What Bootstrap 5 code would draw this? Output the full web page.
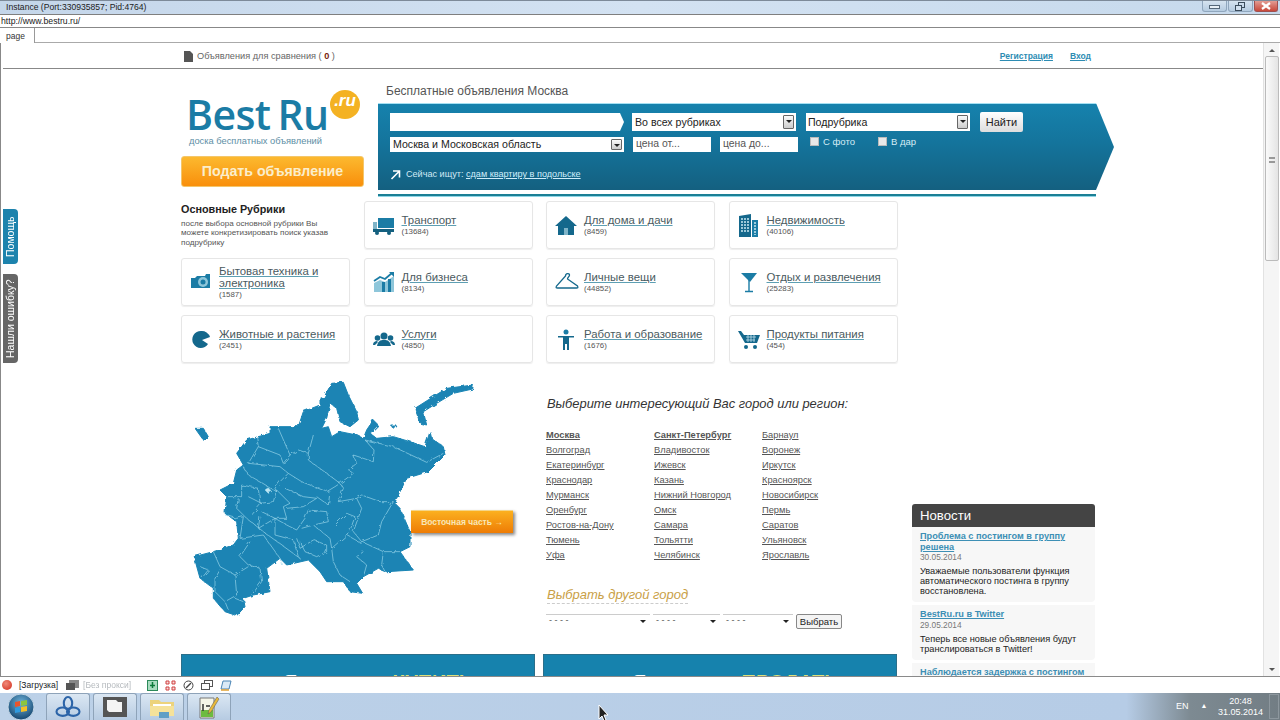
<!DOCTYPE html>
<html lang="ru">
<head>
<meta charset="UTF-8">
<title>Instance</title>
<link href="https://cdn.jsdelivr.net/npm/bootstrap@5.3.0/dist/css/bootstrap.min.css" rel="stylesheet">
<style>
html,body{height:720px;overflow:hidden;background:#fff}
body{font-family:"Liberation Sans",Arial,sans-serif;font-size:10px;color:#333;width:1280px}
a{color:inherit}
/* window chrome */
.w-title{height:14px;background:linear-gradient(90deg,#c4d6ea,#d3e2f2 50%,#c6d9ec);border-top:1px solid #7d8a99;font-size:8.6px;color:#222;padding-left:6px;line-height:12px}
.w-btns{margin-left:auto;margin-right:2px}
.w-btn{height:11px;width:25px;border:1px solid #8fa6bd;border-top:0;border-radius:0 0 3px 3px;background:linear-gradient(#d5e3f0,#b5cbe0);margin-left:1px}
.w-btn.shut{width:24px;background:linear-gradient(#e39c93,#c8483a);border-color:#a05050}
.w-addr{height:14px;border-top:1px solid #7f7f7f;border-bottom:1px solid #888;font-size:8.7px;line-height:12px;color:#222;padding-left:1px}
.w-tabs{height:15px;position:relative;border-bottom:1px solid #aaa}
.w-tab{width:35px;height:15px;border-right:1px solid #999;font-size:8.5px;line-height:16px;padding-left:6px;background:#fff}
.w-body{height:633px;position:relative;overflow:hidden;border-left:1px solid #888}
.w-scroll{position:absolute;top:0;right:1px;width:16px;height:633px;border-left:1px solid #e2e2e2;background:#f5f5f5}
.w-thumb{position:absolute;top:13px;left:1px;width:14px;height:205px;background:linear-gradient(90deg,#fafafa,#e4e4e4);border:1px solid #bbb;border-radius:2px}
.w-thumb i{position:absolute;left:3px;top:100px;width:6px;height:6px;border-top:2px double #999;border-bottom:2px double #999}
.w-arr{position:absolute;left:5px;width:0;height:0;border:3px solid transparent}
.w-arr.up{top:3px;border-bottom-color:#555}
.w-arr.down{bottom:2px;border-top-color:#555}
.w-status{height:17px;border-top:1px solid #8a8a8a;font-size:8.5px;background:#fff}
.rec{width:10px;height:10px;border-radius:50%;background:radial-gradient(circle at 40% 35%,#f08a7a,#d22a18);margin:0 7px 0 2px}
.tool-icons{gap:7px;margin-left:16px}
.task{height:27px;background:linear-gradient(90deg,#bcd1e8 0,#b6cce6 88%,#7d8a92 93%,#727d84);position:relative}
.orb{width:30px;height:27px;margin:0 10px 0 6px}
.task-b{width:44px;height:27px;margin-right:3px;background:linear-gradient(#dbe7f3,#b6cbe2);border:1px solid #8ea3b9;border-bottom:0;border-radius:3px 3px 0 0}
.cursor-ico{left:598px;top:12px}
.tray{margin-left:auto;color:#fff;font-size:9px;width:104px}
.tray-up{font-size:7px;margin-left:12px}
.tray-clock{text-align:center;line-height:11px;width:50px;margin-left:8px}
.tray-show{width:10px;height:25px;border:1px solid #8d979e;margin-left:4px}
/* page */
.side-tab{position:absolute;left:2px;width:15px;border-radius:4px 0 0 4px;color:#fff;font-size:10.5px;writing-mode:vertical-rl;transform:rotate(180deg);text-align:center;line-height:15px}
.side-help{top:166px;height:55px;background:#1d83ad}
.side-err{top:231px;height:89px;background:#666}
.top-strip{height:26px;margin:0 15px 0 2px;border-bottom:1px solid #888;padding:2px 0 0 181px;font-size:9.2px;color:#666}
.top-strip b{color:#7a1f10}
.top-links{margin-left:auto;margin-right:174px;gap:17px;font-size:8.5px;font-weight:700;color:#2d8cb3}
.page-in{margin-left:180px;width:914px}
.logo-col{width:183px;flex:none}
.logo{height:69px;position:relative;margin-top:17px;padding-left:5px}
.logo-txt{font-family:"Open Sans",sans-serif;font-weight:600;font-size:41px;line-height:45px;padding-top:6px;color:#1b7ca5;letter-spacing:-.6px;display:block;height:51px;word-spacing:-3px}
.logo-ru{position:absolute;left:149px;top:4px;width:30px;height:29px;border-radius:50%;background:#f4b223;color:#fff;font-style:italic;font-weight:700;font-size:17px;line-height:22px;text-align:center}
.logo-sub{font-size:9.3px;color:#5d8ea5;display:block;margin:-2px 0 0 3px}
.add-btn{height:31px;margin-top:1px;border-radius:3px;background:linear-gradient(#fcb92f,#f98f0b);color:#fbeecb;font-weight:700;font-size:14.2px;line-height:29px;text-align:center;border:1px solid #f4c66a;width:183px}
.hero{margin-left:14px;width:736px;flex:none}
.hero-h{font-size:12px;color:#555;padding-left:8px;height:13px;line-height:13px;margin-top:16px}
.bar{height:87px;margin-top:5px;background:linear-gradient(#1682ad,#14749c 45%,#146080);border-top:1px solid #a5e0f2;clip-path:polygon(0 0,718px 0,736px 44px,718px 87px,0 87px);padding:9px 0 0 12px;font-size:9.5px;color:#fff}
.bar-line{width:718px;height:3px;background:#1b7f95;border-bottom:1px solid #8fd6e6;margin-top:4px}
.bar-r{gap:8px;height:18px}
.bar-r2{gap:9px;height:15px;margin-top:6px}
.sel{background:#fff;color:#222;font-size:10.6px;height:100%;padding-left:3px;line-height:1;position:relative}
.sel i{position:absolute;right:2px;top:2px;bottom:2px;width:11px;background:linear-gradient(#fafafa,#ccc);border:1px solid #666;border-radius:1px}
.sel i::after{content:"";position:absolute;left:2px;top:4px;border:3px solid transparent;border-top-color:#222}
.q-in{width:234px;height:18px;background:#fff;clip-path:polygon(0 0,230px 0,234px 9px,230px 18px,0 18px)}
.w164{width:164px}
.w234{width:234px}
.sub-sel{margin-left:2px;padding-left:2px}
.price{width:78px;color:#555;font-size:10.4px}
.go{width:43px;height:20px;margin:-1px 0 0 2px;border-radius:2px;background:linear-gradient(#fff,#ddd);color:#222;font-size:11px;text-align:center;line-height:21px}
.chk-box{margin-left:3px}
.chk{width:9px;height:9px;background:#e8e8e8;border:1px solid #bbb;margin-right:4px}
.chk-lbl{color:#d6ecf5;font-size:9.5px;margin-top:-2px}
.chk-lbl.one{margin-right:23px}
.now{margin-top:16px;color:#d2eaf4;font-size:9.1px}
.now svg{margin-right:5px}
.now u{color:#cfeefb}
.rub-grid{display:grid;grid-template-columns:repeat(4,169px);gap:9px 13.5px;margin-top:4px;width:717px}
.rub-intro{height:48px;padding-top:2px}
.rub-intro h6{font-size:10.8px;font-weight:700;color:#222;margin:0 0 3px;line-height:13px}
.rub-intro p{margin:0;font-size:8.1px;line-height:9.3px;color:#555;width:162px}
.rub{height:48px;border:1px solid #e6e6e6;border-radius:3px;box-shadow:0 1px 1px #eee;padding-left:8px;gap:7px}
.rub svg{flex:none;width:22px;height:24px}
.rub svg.hang{width:25px;margin-right:-3px}
.rub a{display:block;font-size:11.4px;line-height:12px;color:#4a5a60;text-decoration-color:#5d9fb3}
.rub small{display:block;font-size:7.9px;line-height:10px;color:#555;margin-top:1px}
.map-row{height:282px;margin-top:9px}
.map-wrap{width:365px;position:relative}
.map-wrap svg{position:absolute;left:-1px;top:3px;width:350px;height:250px}
.east-btn{position:absolute;left:230px;top:138px;width:102px;height:23px;background:linear-gradient(#fbb01f,#ee7c05);color:#f8e6b8;font-weight:700;font-size:8.5px;line-height:22px;text-align:center;box-shadow:2px 2px 3px #888;border-top:1px solid #f5d68a}
.city-h{font-style:italic;font-size:12.9px;color:#333;margin-top:24px;line-height:16px;padding-left:1px}
.city-cols{margin-top:16px}
.city-col{width:108px}
.city-col a{display:block;font-size:9.3px;line-height:15.05px;color:#555}
.other{font-style:italic;font-size:13px;color:#c9a046;margin:24px 0 0 1px;line-height:16px;border-bottom:1px dashed #ccc;display:inline-block}
.pick-row{gap:3px;margin-top:10px;height:15px}
.pick{height:13px;border-top:1px solid #ccc;font-size:9px;color:#555;padding-left:3px;position:relative;line-height:11px}
.pick::after{content:"";position:absolute;right:4px;top:5px;border:3px solid transparent;border-top-color:#222}
.pick-a{width:104px}
.pick-b{width:67px}
.pick-c{width:70px}
.pick-btn{width:46px;height:15px;border:1px solid #888;border-radius:2px;background:#f4f4f4;font-size:9.5px;text-align:center;color:#222;line-height:13px}
.deal-row{gap:8px}
.deal{width:354px;height:60px;background:#1682ad;border:1px solid #2b6f8a;color:#fff;font-size:20px;font-weight:700;padding-top:15px;line-height:24px}
.deal b{color:#dfe07a;margin-left:39px}
.deal-buy{padding-left:101px}
.deal-sell{padding-left:88px}
.news{width:183px;margin-left:14px;margin-top:307px;flex:none}
.news-h{height:23px;background:#444;color:#fff;font-size:13.2px;line-height:23px;border-radius:3px 3px 0 0;padding-left:8px}
.news-i{background:#f7f7f7;border-radius:0 0 4px 4px;padding:4px 8px 6px;margin-bottom:3px}
.news-i a{display:block;color:#3d8fb5;font-weight:700;font-size:9.2px;line-height:10.5px}
.news-i span{display:block;color:#777;font-size:8.3px;line-height:10px}
.news-i p{margin:4px 0 0;color:#222;font-size:9.2px;line-height:10px}
</style>
</head>
<body>

<div class="w-title d-flex">
  <span>Instance (Port:330935857; Pid:4764)</span>
  <div class="w-btns d-flex">
    <div class="w-btn d-flex align-items-center justify-content-center"><svg width="11" height="5"><rect x="0.5" y="1.5" width="10" height="3" fill="#e8f0f7" stroke="#55687a"/></svg></div>
    <div class="w-btn d-flex align-items-center justify-content-center"><svg width="11" height="9"><rect x="3.5" y="0.5" width="6" height="5" fill="none" stroke="#3b4c5c"/><rect x="0.5" y="3.5" width="6" height="5" fill="#d0dfee" stroke="#3b4c5c"/></svg></div>
    <div class="w-btn shut d-flex align-items-center justify-content-center"><svg width="10" height="8"><path d="M1 1 9 7M9 1 1 7" stroke="#fff" stroke-width="2.2"/></svg></div>
  </div>
</div>
<div class="w-addr">http://www.bestru.ru/</div>
<div class="w-tabs"><div class="w-tab">page</div></div>

<div class="w-body">
  <div class="side-tab side-help">Помощь</div>
  <div class="side-tab side-err">Нашли ошибку?</div>

  <div class="top-strip d-flex align-items-center">
    <svg width="9" height="11" class="me-1"><path d="M0 0h6l3 3v8H0z" fill="#555"/></svg>
    <span>Объявления для сравнения ( <b>0</b> )</span>
    <div class="top-links d-flex"><u>Регистрация</u><u>Вход</u></div>
  </div>

  <div class="page-in">
    <div class="d-flex">
      <div class="logo-col">
        <div class="logo">
          <span class="logo-txt">Best Ru</span>
          <span class="logo-ru">.ru</span>
          <span class="logo-sub">доска бесплатных объявлений</span>
        </div>
        <div class="add-btn">Подать объявление</div>
      </div>
      <div class="hero">
        <div class="hero-h">Бесплатные объявления Москва</div>
        <div class="bar">
          <div class="bar-r d-flex">
            <div class="q-in"></div>
            <div class="sel w164 d-flex align-items-center">Во всех рубриках<i></i></div>
            <div class="sel w164 sub-sel d-flex align-items-center">Подрубрика<i></i></div>
            <div class="go">Найти</div>
          </div>
          <div class="bar-r2 d-flex">
            <div class="sel w234 d-flex align-items-center">Москва и Московская область<i></i></div>
            <div class="sel price d-flex align-items-center">цена от...</div>
            <div class="sel price d-flex align-items-center">цена до...</div>
            <div class="chk-box d-flex align-items-start">
              <span class="chk"></span><span class="chk-lbl one">С фото</span>
              <span class="chk"></span><span class="chk-lbl">В дар</span>
            </div>
          </div>
          <div class="now d-flex align-items-center">
            <svg width="11" height="11"><path d="M1.5 10 9 2.5M3 2h6.5v6.5" fill="none" stroke="#fff" stroke-width="1.6"/></svg>
            <span>Сейчас ищут: <u>сдам квартиру в подольске</u></span>
          </div>
        </div>
        <div class="bar-line"></div>
      </div>
    </div>

    <div class="d-flex">
      <div>
        <div class="rub-grid">
          <div class="rub-intro">
            <h6>Основные Рубрики</h6>
            <p>после выбора основной рубрики Вы можете конкретизировать поиск указав подрубрику</p>
          </div>
          <div class="rub d-flex align-items-center">
            <svg viewBox="0 0 22 24"><rect x="5" y="5" width="16" height="10" fill="#1b7ca5"/><path d="M0 9h4v9H0z" fill="#7fb4c8"/><rect y="16" width="21" height="3" fill="#14607f"/><circle cx="4" cy="20" r="2" fill="#14607f"/><circle cx="16" cy="20" r="2" fill="#14607f"/></svg>
            <div><a href="#">Транспорт</a><small>(13684)</small></div>
          </div>
          <div class="rub d-flex align-items-center">
            <svg viewBox="0 0 22 24"><path d="M11 3 0 13h3v9h6v-7h4v7h6v-9h3z" fill="#14688c"/><rect x="9" y="15" width="4" height="7" fill="#7fb4c8"/></svg>
            <div><a href="#">Для дома и дачи</a><small>(8459)</small></div>
          </div>
          <div class="rub d-flex align-items-center">
            <svg viewBox="0 0 22 24"><path d="M1 3 13 1v23H1z" fill="#14688c"/><rect x="14" y="7" width="6" height="17" fill="#1b7ca5"/><path d="M4 5v14M7 5v14M10 5v14M17 9v13" stroke="#bfe0ec" stroke-width="1.6" stroke-dasharray="2 1"/></svg>
            <div><a href="#">Недвижимость</a><small>(40106)</small></div>
          </div>
          <div class="rub d-flex align-items-center">
            <svg viewBox="0 0 22 24"><path d="M1 8h4l2-2h8l1-2h4v14H1z" fill="#1b7ca5"/><circle cx="13" cy="12" r="5" fill="#8ec6da"/><circle cx="13" cy="12" r="2.5" fill="#1b7ca5"/></svg>
            <div><a href="#">Бытовая техника и электроника</a><small>(1587)</small></div>
          </div>
          <div class="rub d-flex align-items-center">
            <svg viewBox="0 0 22 24"><path d="M1 22V13l6-3 5 2 9-6v16z" fill="#8ec6da"/><path d="M1 11 7 7l5 2 7-6" fill="none" stroke="#1b7ca5" stroke-width="1.8"/><path d="M16 2h5v5z" fill="#1b7ca5"/><path d="M9 22V12h3v10zM15 22V9h3v13z" fill="#1b7ca5"/></svg>
            <div><a href="#">Для бизнеса</a><small>(8134)</small></div>
          </div>
          <div class="rub d-flex align-items-center">
            <svg class="hang" viewBox="0 0 24 24"><path d="M10 6c0-3 4-3 4-1 0 2-2 2-2 4l10 7c1 2 0 2-1 2H2c-1 0-2 0-1-2z" fill="none" stroke="#14688c" stroke-width="1.3"/></svg>
            <div><a href="#">Личные вещи</a><small>(44852)</small></div>
          </div>
          <div class="rub d-flex align-items-center">
            <svg viewBox="0 0 22 24"><path d="M3 3h16l-7 9z" fill="#1b7ca5"/><path d="M11 10v11M7 21.5h8" stroke="#1b7ca5" stroke-width="1.4"/></svg>
            <div><a href="#">Отдых и развлечения</a><small>(25283)</small></div>
          </div>
          <div class="rub d-flex align-items-center">
            <svg viewBox="0 0 22 24"><path d="M11 4a8.500 8.500 0 1 0 7 13l-6-4 8-3a8.500 8.500 0 0 0-9-6z" fill="#14688c"/></svg>
            <div><a href="#">Животные и растения</a><small>(2451)</small></div>
          </div>
          <div class="rub d-flex align-items-center">
            <svg viewBox="0 0 22 24"><circle cx="11" cy="9" r="3.5" fill="#14688c"/><circle cx="4.5" cy="11" r="2.8" fill="#14688c"/><circle cx="17.5" cy="11" r="2.8" fill="#14688c"/><path d="M4 19c1-5 3-6 7-6s6 1 7 6zM0 18c0-3 2-4 4-4l1 1-3 3zM22 18c0-3-2-4-4-4l-1 1 3 3z" fill="#14688c"/></svg>
            <div><a href="#">Услуги</a><small>(4850)</small></div>
          </div>
          <div class="rub d-flex align-items-center">
            <svg viewBox="0 0 22 24"><circle cx="11" cy="5" r="2.5" fill="#1b7ca5"/><path d="M3 9h16v1.500h-5V23h-2v-6h-2v6H8V10.500H3z" fill="#14688c"/></svg>
            <div><a href="#">Работа и образование</a><small>(1676)</small></div>
          </div>
          <div class="rub d-flex align-items-center">
            <svg viewBox="0 0 22 24"><path d="M0 4h3l3 4h16l-3 8H7z" fill="#14688c"/><path d="M8 10h10M8 13h9M10 8v7M13 8v7M16 8v7" stroke="#bfe0ec" stroke-width=".8"/><circle cx="8" cy="20" r="2" fill="#14688c"/><circle cx="17" cy="20" r="2" fill="#14688c"/></svg>
            <div><a href="#">Продукты питания</a><small>(454)</small></div>
          </div>
        </div>

        <div class="map-row d-flex">
          <div class="map-wrap">
            <svg viewBox="0 0 1050 750">
              <defs>
                <filter id="rough" x="-5%" y="-5%" width="110%" height="110%">
                  <feTurbulence type="fractalNoise" baseFrequency=".07" numOctaves="2" seed="4"/>
                  <feDisplacementMap in="SourceGraphic" scale="11"/>
                </filter>
              </defs>
              <g filter="url(#rough)">
              <g fill="#1a84b4" stroke="#1a84b4" stroke-width="3" stroke-linejoin="round">
                <path fill-rule="evenodd" d="M430 70 455 25 490 22 505 60 530 110 535 135 510 155 480 140 470 100 450 85 440 130 425 160 445 155 455 185 480 170 530 180 550 190 560 165 580 135 595 150 570 175 590 190 640 185 690 200 735 215 750 170 755 190 790 215 795 240 745 290 680 310 650 370 645 385 660 400 690 470 690 515 660 530 700 585 620 590 595 580 550 605 530 625 548 655 510 650 490 620 440 620 420 590 385 555 320 570 300 550 260 580 270 650 220 660 190 670 195 695 170 722 135 710 100 670 100 640 60 610 42 545 100 530 160 510 175 490 170 440 135 415 140 365 120 345 160 325 170 285 190 270 170 235 200 195 270 175 270 155 355 155 370 110 420 90 420 65Z"/>
                <path d="M705 100 760 65 800 40 880 30 878 42 820 55 770 85 730 110 740 150 720 145Z"/>
                <path d="M45 160 70 160 85 185 70 195Z"/>
                <path d="M632 150 648 150 640 160Z"/>
              </g>
              <g fill="none" stroke="#9fd8ec" stroke-width="2">
                <path d="M295 160 330 240 355 225 385 235 385 255 440 295 480 325 520 295 505 285 530 265 520 240 580 260 582 225 555 195"/>
                <path d="M400 180 385 235"/>
                <path d="M555 195 640 215 740 262 790 235"/>
                <path d="M230 185 235 215 300 240 310 265 330 240"/>
                <path d="M235 215 205 265 300 275 325 295 300 320 285 340 290 350 240 320 205 300 190 275"/>
                <path d="M325 295 365 320 440 350 465 335 480 325 490 340 475 380 530 370"/>
                <path d="M530 370 545 360 600 380 640 380 605 440 595 480 545 500"/>
                <path d="M530 370 545 400 520 470 545 500 610 530 660 530"/>
                <path d="M500 480 545 505"/>
                <path d="M610 530 605 570 615 590"/>
                <path d="M500 480 455 520 460 560 480 600 510 620"/>
                <path d="M550 530 530 545 560 570 550 605"/>
                <path d="M290 345 280 380 240 385 235 340 185 330 185 365 140 365"/>
                <path d="M175 370 170 400 200 430 250 470 360 550"/>
                <path d="M205 365 245 385 215 420"/>
                <path d="M290 345 330 385 310 395 320 430 285 430 245 410"/>
                <path d="M315 340 370 365 410 370 370 395 320 400"/>
                <path d="M410 365 445 390 450 350"/>
                <path d="M135 420 170 430 190 425 180 490 250 480"/>
                <path d="M240 425 235 460 285 430 285 480 340 495 355 545"/>
                <path d="M285 430 320 450 350 465 375 430 385 405 440 410 445 440 400 450 365 460"/>
                <path d="M350 490 360 520 400 495 440 510 440 530 410 545 375 530 360 500"/>
                <path d="M400 450 450 490 455 520"/>
                <path d="M465 450 500 415 525 425 505 480"/>
                <path d="M250 480 300 550 305 570"/>
                <path d="M210 500 180 545 205 570 240 580 245 620 215 660"/>
                <path d="M100 530 120 575 165 600 205 575"/>
                <path d="M120 585 105 610 105 650 135 680 170 660 165 600"/>
                <path d="M135 680 145 705M165 670 190 680"/>
                <path d="M60 575 85 585 65 610"/>
                <path d="M255 345 265 338 275 350 265 355Z" fill="#bfe6f3"/>
              </g>
              </g>
            </svg>
            <div class="east-btn">Восточная часть →</div>
          </div>
          <div>
            <div class="city-h">Выберите интересующий Вас город или регион:</div>
            <div class="city-cols d-flex">
              <div class="city-col">
                <a href="#"><b>Москва</b></a><a href="#">Волгоград</a><a href="#">Екатеринбург</a><a href="#">Краснодар</a><a href="#">Мурманск</a><a href="#">Оренбург</a><a href="#">Ростов-на-Дону</a><a href="#">Тюмень</a><a href="#">Уфа</a>
              </div>
              <div class="city-col">
                <a href="#"><b>Санкт-Петербург</b></a><a href="#">Владивосток</a><a href="#">Ижевск</a><a href="#">Казань</a><a href="#">Нижний Новгород</a><a href="#">Омск</a><a href="#">Самара</a><a href="#">Тольятти</a><a href="#">Челябинск</a>
              </div>
              <div class="city-col">
                <a href="#">Барнаул</a><a href="#">Воронеж</a><a href="#">Иркутск</a><a href="#">Красноярск</a><a href="#">Новосибирск</a><a href="#">Пермь</a><a href="#">Саратов</a><a href="#">Ульяновск</a><a href="#">Ярославль</a>
              </div>
            </div>
            <div class="other">Выбрать другой город</div>
            <div class="pick-row d-flex">
              <div class="pick pick-a">- - - -</div>
              <div class="pick pick-b">- - - -</div>
              <div class="pick pick-c">- - - -</div>
              <div class="pick-btn">Выбрать</div>
            </div>
          </div>
        </div>

        <div class="deal-row d-flex">
          <div class="deal deal-buy">Я хочу <b>КУПИТЬ</b></div>
          <div class="deal deal-sell">Я хочу <b>ПРОДАТЬ</b></div>
        </div>
      </div>

      <div class="news">
        <div class="news-h">Новости</div>
        <div class="news-i">
          <a href="#">Проблема с постингом в группу решена</a>
          <span>30.05.2014</span>
          <p>Уважаемые пользователи функция автоматического постинга в группу восстановлена.</p>
        </div>
        <div class="news-i">
          <a href="#">BestRu.ru в Twitter</a>
          <span>29.05.2014</span>
          <p>Теперь все новые объявления будут транслироваться в Twitter!</p>
        </div>
        <div class="news-i">
          <a href="#">Наблюдается задержка с постингом</a>
        </div>
      </div>
    </div>
  </div>

  <div class="w-scroll">
    <div class="w-arr up"></div>
    <div class="w-thumb"><i></i></div>
    <div class="w-arr down"></div>
  </div>
</div>

<div class="w-status d-flex align-items-center">
  <span class="rec"></span>
  <span class="text-dark me-2">[Загрузка]</span>
  <svg width="13" height="11" class="me-1"><rect x="3" y="0" width="10" height="8" fill="#888"/><rect x="0" y="3" width="9" height="7" fill="#555"/></svg>
  <span class="text-secondary opacity-50">[Без прокси]</span>
  <div class="tool-icons d-flex align-items-center">
    <svg width="11" height="11"><rect x=".5" y=".5" width="10" height="10" fill="#a9dcc0" stroke="#2c8a5a"/><path d="M5.500 2v6M3 5.500h5" stroke="#0c7a3a" stroke-width="1.500"/></svg>
    <svg width="11" height="11"><path d="M1 1h3v3H1zM7 1h3v3H7zM1 7h3v3H1zM7 7h3v3H7z" fill="#f7dada" stroke="#d04040"/></svg>
    <svg width="11" height="11"><circle cx="5.500" cy="5.500" r="4.500" fill="#fff" stroke="#444"/><path d="M3 8 8 3" stroke="#444" stroke-width="1.500"/></svg>
    <svg width="12" height="11"><rect x="3.500" y=".5" width="8" height="6" fill="#fff" stroke="#555"/><rect x=".5" y="3.500" width="8" height="6" fill="#fff" stroke="#555"/></svg>
    <svg width="12" height="11"><path d="M3 1h8l-2 8H1z" fill="#dbeaf6" stroke="#4a85b5"/><path d="M1 10h8" stroke="#e0a030" stroke-width="1.500"/></svg>
  </div>
</div>

<div class="task d-flex align-items-end">
  <svg class="orb" viewBox="0 0 30 27">
    <defs><radialGradient id="og" cx=".5" cy=".35" r=".7"><stop offset="0" stop-color="#6fb4dc"/><stop offset="1" stop-color="#0e3d66"/></radialGradient></defs>
    <circle cx="15" cy="14" r="13" fill="url(#og)" stroke="#c3d6e6"/>
    <path d="M9 9l5-1v5l-5 1z" fill="#e8552c"/><path d="M15 8l6-1v5l-6 1z" fill="#8cc63f"/><path d="M9 15l5-1v5l-5 1z" fill="#2f9be0"/><path d="M15 14l6-1v5l-6 1z" fill="#f6c026"/>
  </svg>
  <div class="task-b d-flex align-items-center justify-content-center"><svg width="26" height="23" viewBox="0 0 24 22"><g fill="none" stroke="#2c64a8" stroke-width="2"><ellipse cx="12" cy="7" rx="4" ry="6"/><ellipse cx="7" cy="15" rx="6" ry="4"/><ellipse cx="17" cy="15" rx="6" ry="4"/></g></svg></div>
  <div class="task-b d-flex align-items-center justify-content-center"><svg width="24" height="20" viewBox="0 0 24 20"><rect width="24" height="20" fill="#555"/><path d="M4 3h9l2 2h4v10H6l-2-2z" fill="#f4f4f4"/></svg></div>
  <div class="task-b d-flex align-items-center justify-content-center"><svg width="26" height="21" viewBox="0 0 26 21"><path d="M1 3h9l2 2h13v14H1z" fill="#ecd37c"/><rect x="4" y="7" width="18" height="6" fill="#fff"/><path d="M1 9h24v10H1z" fill="#f5e29a"/><rect x="10" y="15" width="10" height="6" fill="#5f9fc6"/></svg></div>
  <div class="task-b d-flex align-items-center justify-content-center"><svg width="22" height="23" viewBox="0 0 22 23"><path d="M2 2h14v20H2z" fill="#f6f6e8" stroke="#777"/><path d="M3 14h12v7H3z" fill="#6dbb3f"/><path d="M5 8v7M8 10h4" stroke="#333" stroke-width="1.500"/><path d="M19 1 11 14l-1 4 3-2 8-13z" fill="#e8b93a" stroke="#555" stroke-width=".5"/></svg></div>
  <svg width="12" height="17" class="position-absolute cursor-ico"><path d="M1 0v14l3-3 2 5 2-1-2-5h4z" fill="#222" stroke="#fff"/></svg>
  <div class="tray d-flex align-items-center align-self-stretch">
    <span>EN</span>
    <span class="tray-up">▲</span>
    <div class="tray-clock">20:48<br>31.05.2014</div>
    <div class="tray-show"></div>
  </div>
</div>

<script src="https://cdn.jsdelivr.net/npm/bootstrap@5.3.0/dist/js/bootstrap.bundle.min.js"></script>
</body>
</html>
